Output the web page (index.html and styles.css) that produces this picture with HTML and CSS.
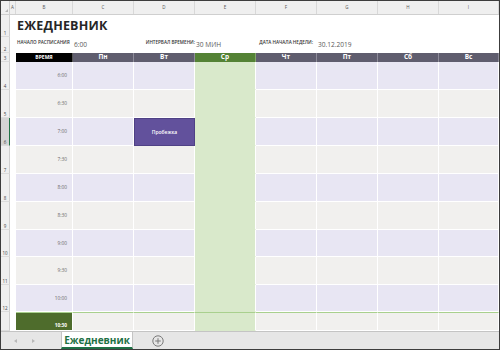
FILE: index.html
```html
<!DOCTYPE html>
<html lang="ru">
<head>
<meta charset="utf-8">
<title>Ежедневник</title>
<link rel="stylesheet" href="styles.css">
</head>
<body>
<div class="app">
  <div class="sheet">
    <div class="r r-head">
      <div class="rn corner"><span class="tri"></span></div>
      <div class="ch">A</div><div class="ch">B</div><div class="ch">C</div><div class="ch">D</div><div class="ch">E</div><div class="ch">F</div><div class="ch">G</div><div class="ch">H</div><div class="ch">I</div>
    </div>
    <div class="r r-title">
      <div class="rn">1</div><div class="w"></div>
      <div class="title">ЕЖЕДНЕВНИК</div>
    </div>
    <div class="r r-info">
      <div class="rn">2</div><div class="w"></div>
      <div class="lbl">НАЧАЛО РАСПИСАНИЯ</div>
      <div class="val">6:00</div>
      <div class="lbl lbl-r">ИНТЕРВАЛ ВРЕМЕНИ:</div>
      <div class="val">30 МИН</div>
      <div class="lbl lbl-r2">ДАТА НАЧАЛА НЕДЕЛИ:</div>
      <div class="val val-wide">30.12.2019</div>
    </div>
    <div class="r r-days">
      <div class="rn">3</div><div class="w"></div>
      <div class="dh dh-time">ВРЕМЯ</div>
      <div class="dh">Пн</div><div class="dh">Вт</div><div class="dh dh-today">Ср</div><div class="dh">Чт</div><div class="dh">Пт</div><div class="dh">Сб</div><div class="dh">Вс</div>
    </div>
    <div class="r h28 odd">
      <div class="rn">4</div><div class="w"></div><div class="t">6:00</div>
      <div class="c"></div><div class="c"></div><div class="c g"></div><div class="c"></div><div class="c"></div><div class="c"></div><div class="c"></div>
    </div>
    <div class="r h28 even">
      <div class="rn">5</div><div class="w"></div><div class="t">6:30</div>
      <div class="c"></div><div class="c"></div><div class="c g"></div><div class="c"></div><div class="c"></div><div class="c"></div><div class="c"></div>
    </div>
    <div class="r h28 odd">
      <div class="rn rn-sel">6</div><div class="w"></div><div class="t">7:00</div>
      <div class="c"></div><div class="c ev">Пробежка</div><div class="c g"></div><div class="c"></div><div class="c"></div><div class="c"></div><div class="c"></div>
    </div>
    <div class="r h28 even">
      <div class="rn">7</div><div class="w"></div><div class="t">7:30</div>
      <div class="c"></div><div class="c"></div><div class="c g"></div><div class="c"></div><div class="c"></div><div class="c"></div><div class="c"></div>
    </div>
    <div class="r h28 odd">
      <div class="rn">8</div><div class="w"></div><div class="t">8:00</div>
      <div class="c"></div><div class="c"></div><div class="c g"></div><div class="c"></div><div class="c"></div><div class="c"></div><div class="c"></div>
    </div>
    <div class="r h28 even">
      <div class="rn">9</div><div class="w"></div><div class="t">8:30</div>
      <div class="c"></div><div class="c"></div><div class="c g"></div><div class="c"></div><div class="c"></div><div class="c"></div><div class="c"></div>
    </div>
    <div class="r h27 odd">
      <div class="rn">10</div><div class="w"></div><div class="t">9:00</div>
      <div class="c"></div><div class="c"></div><div class="c g"></div><div class="c"></div><div class="c"></div><div class="c"></div><div class="c"></div>
    </div>
    <div class="r h28 even">
      <div class="rn">11</div><div class="w"></div><div class="t">9:30</div>
      <div class="c"></div><div class="c"></div><div class="c g"></div><div class="c"></div><div class="c"></div><div class="c"></div><div class="c"></div>
    </div>
    <div class="r h27 odd">
      <div class="rn">12</div><div class="w"></div><div class="t">10:00</div>
      <div class="c"></div><div class="c"></div><div class="c g"></div><div class="c"></div><div class="c"></div><div class="c"></div><div class="c"></div>
    </div>
    <div class="r r-last even">
      <div class="rn"></div><div class="w"></div><div class="t t-now">10:30</div>
      <div class="c"></div><div class="c"></div><div class="c g"></div><div class="c"></div><div class="c"></div><div class="c"></div><div class="c"></div>
    </div>
  </div>
  <div class="tabs">
    <span class="arr arr-l"></span>
    <span class="arr arr-r"></span>
    <div class="tab">Ежедневник</div>
    <svg class="plus" width="12" height="12" viewBox="0 0 12 12"><circle cx="6" cy="6" r="5.2" fill="none" stroke="#7a7a7a" stroke-width="1"/><path d="M6 3.2v5.6M3.2 6h5.6" stroke="#7a7a7a" stroke-width="1"/></svg>
  </div>
</div>
</body>
</html>
```
FILE: styles.css
```css
* { box-sizing: border-box; }
html, body { margin: 0; padding: 0; background: #fff; }
body { font-family: "Open Sans", "Noto Sans", sans-serif; }

.app {
  width: 500px;
  height: 350px;
  border: 1px solid #3c3c3c;
  display: flex;
  flex-direction: column;
  overflow: hidden;
  background: #fff;
}
.sheet { flex: 1; display: flex; flex-direction: column; overflow: hidden; }

.r {
  display: grid;
  grid-template-columns: 9px 6px 57px repeat(6, 61px) 1fr;
}
.r-head { height: 14px; background: #efefef; border-bottom: 1px solid #cfcfcf; }
.r-title { height: 22px; }
.r-info { height: 16px; }
.r-days { height: 9px; }
.h28 { height: 28px; }
.h27 { height: 27px; }
.r-last { flex: 1; }

.rn {
  background: #efefef;
  border-right: 1px solid #cfcfcf;
  border-bottom: 1px solid #dcdcdc;
  font-size: 4.5px;
  color: #444;
  display: flex;
  align-items: flex-end;
  justify-content: center;
  padding-bottom: 1px;
  line-height: 1;
}
.rn-sel { background: #d4d4d4; border-right: 1px solid #217346; }
.corner { position: relative; border-bottom: none; }
.tri {
  position: absolute; right: 1px; bottom: 2px;
  width: 0; height: 0;
  border-left: 3px solid transparent;
  border-bottom: 3px solid #b5b5b5;
}
.ch {
  font-size: 4.5px; color: #555;
  display: flex; align-items: center; justify-content: center;
  border-right: 1px solid #d8d8d8;
  line-height: 1;
}
.w { background: #fff; }

.title {
  grid-column: 3 / -1;
  font-weight: 700;
  font-size: 12.5px;
  color: #262626;
  letter-spacing: 0.2px;
  padding: 2px 0 0 1px;
  line-height: 18px;
}

.lbl {
  font-size: 4.6px;
  font-weight: 600;
  color: #333;
  padding: 3px 0 0 1px;
  line-height: 1;
  white-space: nowrap;
}
.lbl-r { text-align: right; padding-right: 0; }
.lbl-r2 { text-align: right; padding-right: 4px; }
.val {
  font-size: 6.6px;
  color: #595959;
  padding: 5px 0 0 1px;
  line-height: 1;
  white-space: nowrap;
}
.val-wide { grid-column: span 3; }

.dh {
  background: #5f5d6e;
  color: #fff;
  font-weight: 700;
  font-size: 6.5px;
  display: flex; align-items: center; justify-content: center;
  border-right: 1px solid #8d8b99;
  line-height: 1;
}
.dh-time { background: #000; font-size: 5px; border-right: 1px solid #555; }
.dh-today { background: #548235; border-right-color: #83a66a; }

.t {
  font-size: 4.8px;
  color: #6a6a6a;
  display: flex; align-items: center; justify-content: flex-end;
  padding-right: 5px;
  border-right: 1px solid #fff;
  border-bottom: 1px solid #fff;
  line-height: 1;
}
.c {
  border-right: 1px solid #fff;
  border-bottom: 1px solid #fff;
}
.odd .t, .odd .c { background: #e8e6f3; }
.even .t, .even .c { background: #f1f0ee; }
.r .c.g { background: #d9e9cb; border-bottom-color: #d9e9cb; }
.r .c.ev {
  background: #62519c;
  color: #fff;
  font-size: 5px;
  font-weight: 600;
  display: flex; align-items: center; justify-content: center;
  border: 1px solid #4f4185;
}
.r-last .t, .r-last .c { border-top: 1px solid #a9d08e; }
.r-last .t.t-now {
  background: #4e6c2c;
  color: #fff;
  font-weight: 700;
  align-items: flex-end;
  padding-bottom: 2px;
}

.tabs {
  height: 18px;
  background: #e6e6e6;
  border-top: 1px solid #c4c4c4;
  display: flex;
  align-items: stretch;
  flex: none;
}
.arr { width: 0; height: 0; align-self: center; }
.arr-l {
  margin-left: 13px;
  border-top: 2.5px solid transparent;
  border-bottom: 2.5px solid transparent;
  border-right: 3px solid #b8b8b8;
}
.arr-r {
  margin-left: 15px;
  border-top: 2.5px solid transparent;
  border-bottom: 2.5px solid transparent;
  border-left: 3px solid #b8b8b8;
}
.tab {
  margin-left: 26px;
  width: 72px;
  background: #fff;
  color: #1e7145;
  font-weight: 700;
  font-size: 10px;
  display: flex; align-items: center; justify-content: center;
  border-bottom: 2px solid #1e7145;
  border-left: 1px solid #c4c4c4;
  border-right: 1px solid #c4c4c4;
  line-height: 1;
  padding-top: 1px;
}
.plus { align-self: center; margin-left: 19px; }
```
